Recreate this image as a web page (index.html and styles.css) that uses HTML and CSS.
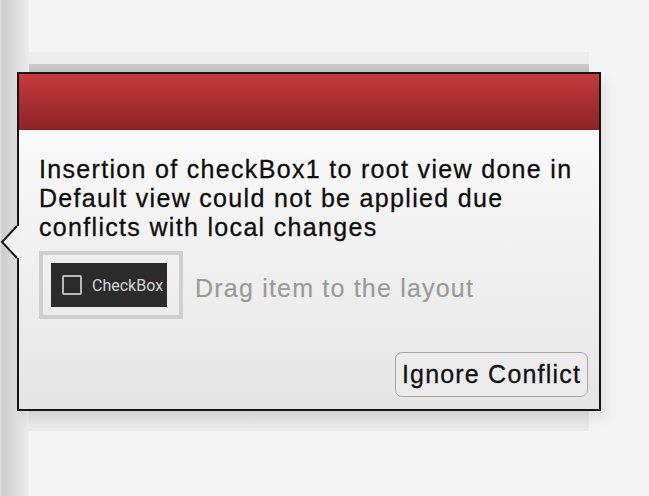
FILE: index.html
```html
<!DOCTYPE html>
<html>
<head>
<meta charset="utf-8">
<link rel="stylesheet" href="styles.css">
</head>
<body>
  <div class="strip"></div>
  <div class="stage">
    <div class="panel">
      <div class="panel-top"></div>
      <div class="panel-bar"></div>
      <div class="panel-body"></div>
    </div>
  </div>

  <div class="popup">
    <div class="popup-header"></div>
    <div class="popup-body">
      <p class="message">Insertion of checkBox1 to root view done in Default view could not be applied due conflicts with local changes</p>
      <div class="drag-row">
        <div class="preview">
          <div class="preview-widget">
            <span class="cb-square"></span>
            <span class="cb-label">CheckBox</span>
          </div>
        </div>
        <span class="drag-hint">Drag item to the layout</span>
      </div>
      <div class="actions">
        <button class="btn">Ignore Conflict</button>
      </div>
    </div>
  </div>

  <svg class="arrow" width="20" height="36" viewBox="0 0 20 36">
    <polygon points="20,2 17,2 2,18 17,34 20,34" fill="#f1f1f1"/>
    <polyline points="17,2 2,18 17,34" fill="none" stroke="#151515" stroke-width="2"/>
  </svg>
</body>
</html>
```

FILE: styles.css
```css
html, body {
  margin: 0;
  padding: 0;
}

body {
  position: relative;
  width: 649px;
  height: 496px;
  overflow: hidden;
  background: #f4f4f4;
  display: flex;
  font-family: "Liberation Sans", Arial, sans-serif;
}

.strip {
  width: 29px;
  flex: none;
  background: linear-gradient(to right, #e6e6e6 0, #cdcdcd 2px, #d3d3d3 8px, #ececec 29px);
}

.stage {
  flex: 1;
}

.panel {
  margin-top: 52px;
  width: 560px;
  height: 379px;
  display: flex;
  flex-direction: column;
}

.panel-top {
  height: 12px;
  background: #ececec;
}

.panel-bar {
  height: 8px;
  background: linear-gradient(#cbcbcb, #bfbfbf);
}

.panel-body {
  flex: 1;
  background: linear-gradient(to bottom, #e2e2e2 calc(100% - 20px), #ebebeb 100%);
}

.popup {
  position: absolute;
  left: 17px;
  top: 72px;
  width: 584px;
  height: 339px;
  box-sizing: border-box;
  border: 2px solid #151515;
  display: flex;
  flex-direction: column;
  box-shadow: 6px 8px 10px rgba(0, 0, 0, 0.07);
}

.popup-header {
  height: 56px;
  flex: none;
  background: linear-gradient(#c63a3c, #8a2326);
}

.popup-body {
  flex: 1;
  display: flex;
  flex-direction: column;
  padding: 25px 0 0 20px;
  background: linear-gradient(#fafafa, #e5e5e5);
}

.message {
  margin: 0;
  width: 555px;
  font-size: 25px;
  line-height: 29px;
  letter-spacing: 1.32px;
  color: #0d0d0d;
  -webkit-text-stroke: 0.3px #0d0d0d;
}

.drag-row {
  margin-top: 9px;
  display: flex;
  align-items: center;
  gap: 12px;
}

.preview {
  width: 144px;
  height: 68px;
  box-sizing: border-box;
  border: 4px solid #cfcfcf;
  padding: 8px;
}

.preview-widget {
  width: 116px;
  height: 44px;
  background: #2b2b2b;
  display: flex;
  align-items: center;
  padding-left: 11px;
  gap: 10px;
  box-sizing: border-box;
}

.cb-square {
  width: 20px;
  height: 20px;
  box-sizing: border-box;
  border: 2px solid #b9b9b9;
  border-radius: 2px;
}

.cb-label {
  font-family: Roboto, "Liberation Sans", sans-serif;
  font-size: 16px;
  color: #d6d6d6;
}

.drag-hint {
  padding-top: 6px;
  font-size: 25px;
  letter-spacing: 1.2px;
  color: #9b9b9b;
  -webkit-text-stroke: 0.2px #9b9b9b;
}

.actions {
  margin-top: auto;
  display: flex;
  justify-content: flex-end;
  padding: 0 11px 12px 0;
}

.btn {
  width: 193px;
  height: 45px;
  box-sizing: border-box;
  border: 1.5px solid #a6a6a6;
  border-radius: 7px;
  background: #ececec;
  font-family: "Liberation Sans", Arial, sans-serif;
  font-size: 25px;
  letter-spacing: 1.2px;
  color: #111;
  -webkit-text-stroke: 0.3px #111;
  padding: 0;
  text-align: center;
}

.arrow {
  position: absolute;
  left: 0;
  top: 224px;
}
```
